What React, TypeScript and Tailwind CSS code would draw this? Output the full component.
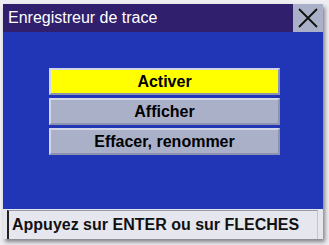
import React from 'react';

const items = [
  { label: 'Activer', active: true },
  { label: 'Afficher', active: false },
  { label: 'Effacer, renommer', active: false },
];

export default function App() {
  return (
    <div className="w-[329px] h-[245px] bg-[#eeeef2] pt-[4px] pl-[3px] overflow-hidden" style={{ fontFamily: '"Liberation Sans", Arial, sans-serif' }}>
      <div className="w-[320px] h-[235px] flex flex-col shadow-[2px_3px_4px_rgba(0,0,0,0.45)]">
        {/* Title bar */}
        <div className="h-[28px] flex bg-[#2f1f6c]">
          <div className="flex-1 flex items-center pl-[5px] text-white text-[16px] leading-none">
            Enregistreur de trace
          </div>
          <div className="w-[30px] bg-[#a9b0c8] flex items-center justify-center">
            <svg width="22" height="22" viewBox="0 0 22 22">
              <path d="M2 2 L20 20 M20 2 L2 20" stroke="#111" strokeWidth="1.8" />
            </svg>
          </div>
        </div>

        {/* Menu area */}
        <div className="flex-1 bg-[#2036b6] pt-[36px] pl-[46px]">
          <div className="w-[231px] flex flex-col gap-[3px]">
            {items.map((item) => (
              <div
                key={item.label}
                className={`h-[27px] flex items-center justify-center font-bold text-[16px] text-black border-2 border-t-[#d2d6e6] border-l-[#d2d6e6] border-b-[#8c93b0] border-r-[#8c93b0] ${
                  item.active ? 'bg-[#ffff00]' : 'bg-[#aab0c8]'
                }`}
              >
                {item.label}
              </div>
            ))}
          </div>
        </div>

        {/* Status bar */}
        <div className="h-[30px] bg-[#e6e7ee] pl-[4px] pr-[5px] pt-[1px]">
          <div className="h-full border-l-2 border-l-[#222] border-t border-t-[#9a9aa6] border-r border-r-[#c4c4cc] flex items-center pl-[3px] text-[16px] font-bold text-[#111]">
            Appuyez sur ENTER ou sur FLECHES
          </div>
        </div>
      </div>
    </div>
  );
}
